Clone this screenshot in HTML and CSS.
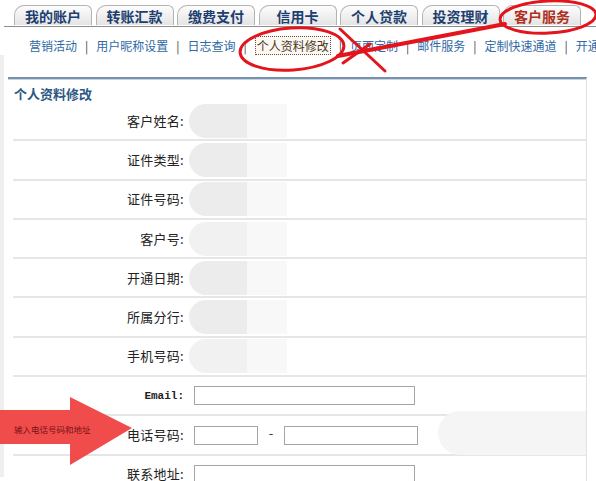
FILE: index.html
```html
<!DOCTYPE html>
<html lang="zh-CN">
<head>
    <meta charset="UTF-8">
    <title>客户服务 - 个人资料修改</title>
    <link rel="stylesheet" href="styles.css">
</head>
<body>
    <div class="tabs">
        <div class="tab">我的账户</div>
        <div class="tab">转账汇款</div>
        <div class="tab">缴费支付</div>
        <div class="tab">信用卡</div>
        <div class="tab">个人贷款</div>
        <div class="tab">投资理财</div>
        <div class="tab active">客户服务</div>
    </div>

    <div class="subnav">
        <a>营销活动</a><span class="sep">|</span><a>用户昵称设置</a><span class="sep">|</span><a>日志查询</a><span class="sep">|</span><a class="current">个人资料修改</a><span class="sep">|</span><a>页面定制</a><span class="sep">|</span><a>邮件服务</a><span class="sep">|</span><a>定制快速通道</a><span class="sep">|</span><a>开通服务</a>
    </div>

    <div class="main">
        <div class="panel">
            <div class="panel-title">个人资料修改</div>
            <div class="row"><div class="label">客户姓名:</div><div class="value"><span class="blur"></span><span class="blur-light"></span></div></div>
            <div class="row"><div class="label">证件类型:</div><div class="value"><span class="blur"></span><span class="blur-light"></span></div></div>
            <div class="row"><div class="label">证件号码:</div><div class="value"><span class="blur"></span><span class="blur-light"></span></div></div>
            <div class="row"><div class="label">客户号:</div><div class="value"><span class="blur soft"></span><span class="blur-light"></span></div></div>
            <div class="row"><div class="label">开通日期:</div><div class="value"><span class="blur"></span><span class="blur-light"></span></div></div>
            <div class="row"><div class="label">所属分行:</div><div class="value"><span class="blur"></span><span class="blur-light"></span></div></div>
            <div class="row"><div class="label">手机号码:</div><div class="value"><span class="blur soft"></span><span class="blur-light"></span></div></div>
            <div class="row"><div class="label latin">Email:</div><div class="value"><input type="text" class="field"></div></div>
            <div class="row"><div class="label">电话号码:</div><div class="value"><input type="text" class="field area"><span class="dash">-</span><input type="text" class="field phone"><span class="blur-right"></span></div></div>
            <div class="row"><div class="label">联系地址:</div><div class="value"><input type="text" class="field"></div></div>
        </div>
    </div>

    <!-- 标注 -->
    <svg class="marks" width="596" height="481" viewBox="0 0 596 481">
        <g fill="none" stroke="#e3141c" stroke-width="3" stroke-linecap="round">
            <ellipse cx="548" cy="17" rx="48" ry="16" transform="rotate(-3 548 17)"/>
            <ellipse cx="292" cy="49" rx="52" ry="21" transform="rotate(-4 292 49)"/>
            <path d="M338 56 L505 24" stroke-width="4"/>
            <path d="M340 29 L385 71"/>
            <path d="M343 63 L370 44"/>
        </g>
        <polygon points="0,410 70,410 70,397 132,428 70,465 70,444 0,444" fill="#f04c4c"/>
        <text x="14" y="433" font-size="8.5" fill="#7a1212" font-family="Noto Sans CJK SC, sans-serif">输入电话号码和地址</text>
    </svg>
</body>
</html>
```

FILE: styles.css
```css
body { margin: 0; background: #fff; font-family: "Noto Sans CJK SC", sans-serif; color: #222; position: relative; height: 481px; overflow: hidden; }

.tabs { display: flex; gap: 3.5px; margin-left: 4px; padding: 5px 0 0 10px; border-bottom: 1px solid #8c8c8c; height: 21px; }
.tab { flex: 0 0 78px; height: 20px; box-sizing: border-box; border: 1px solid #b4b4b4; border-bottom: none; border-radius: 10px 6px 0 0; background: linear-gradient(#fdfdfd, #e4e4e4); text-align: center; font-size: 14px; font-weight: bold; line-height: 20px; color: #1d3e70; }
.tab.active { color: #b0301e; }

.subnav { padding: 10px 0 0 29px; height: 18px; line-height: 18px; font-size: 12px; white-space: nowrap; overflow: hidden; color: #2f69a6; }
.subnav a { color: #2f69a6; }
.subnav .sep { margin: 0 8px; color: #444; }
.subnav .current { color: #4a3622; background: #fbf8f2; border: 1px dotted #6b5035; padding: 0 1px; }

.main { padding-top: 22px; border-left: 4px solid #efefef; height: 400px; }
.panel { margin-left: 4px; width: 578px; border-top: 2px solid #7790ab; border-right: 1px solid #e2e2e2; box-shadow: inset 0 1px 0 #c8d6e4; }
.panel-title { padding: 7px 0 0 6px; height: 16px; line-height: 16px; font-size: 13px; font-weight: bold; color: #2b5784; }

.row { display: flex; align-items: center; margin-left: 5px; height: 37.3px; border-bottom: 2px solid #e6e6e6; }
.label { width: 171px; text-align: right; font-size: 13px; line-height: 16px; letter-spacing: 0.3px; color: #222; }
.label.latin { font-family: "Liberation Mono", monospace; font-size: 11px; font-weight: bold; letter-spacing: 0; }
.value { flex: 1; display: flex; align-items: center; margin-left: 10px; }

.blur { display: inline-block; width: 58px; height: 34px; margin-left: -5px; background: #ececec; border-radius: 17px 0 0 17px; }
.blur.soft { background: #f1f1f1; }
.blur-light { display: inline-block; width: 40px; height: 34px; background: #f8f8f8; }
.blur-right { display: inline-block; width: 148px; height: 44px; margin: -4px 0 0 auto; background: #f5f5f5; border-radius: 22px 0 0 22px; }

.field { width: 221px; height: 19px; box-sizing: border-box; margin: 0; padding: 0; border: 1px solid #a5a5a5; background: #fff; }
.field.area { width: 64px; }
.field.phone { width: 134px; }
.dash { width: 26px; text-align: center; font-size: 13px; color: #333; margin-top: -6px; }

.marks { position: absolute; top: 0; left: 0; pointer-events: none; }
```
